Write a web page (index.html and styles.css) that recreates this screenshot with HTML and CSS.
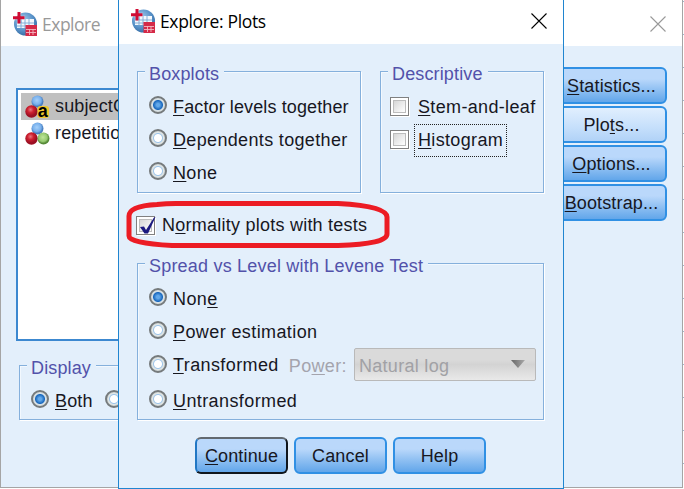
FILE: index.html
```html
<!DOCTYPE html>
<html lang="en">
<head>
<meta charset="utf-8">
<title>Explore: Plots</title>
<link rel="stylesheet" href="styles.css">
</head>
<body>
<svg class="defs" width="0" height="0">
  <defs>
    <radialGradient id="globe" cx="40%" cy="35%" r="65%"><stop offset="0" stop-color="#a6caea"/><stop offset=".65" stop-color="#5a94ca"/><stop offset="1" stop-color="#3a70a8"/></radialGradient>
    <radialGradient id="blueBall" cx="45%" cy="40%"><stop offset="0" stop-color="#a5d0fa"/><stop offset=".7" stop-color="#78b0ec"/><stop offset="1" stop-color="#4a7fc0"/></radialGradient>
    <radialGradient id="redBall" cx="42%" cy="35%"><stop offset="0" stop-color="#e87880"/><stop offset=".5" stop-color="#ce2030"/><stop offset="1" stop-color="#9c1024"/></radialGradient>
    <radialGradient id="greenBall" cx="45%" cy="40%"><stop offset="0" stop-color="#bfe69a"/><stop offset=".7" stop-color="#96ca70"/><stop offset="1" stop-color="#568a38"/></radialGradient>
    <linearGradient id="arrow"><stop offset="0" stop-color="#666"/><stop offset="1" stop-color="#aaa"/></linearGradient>
    <symbol id="app" viewBox="0 0 24 24">
      <circle cx="12.500" cy="12" r="11.500" fill="url(#globe)"/>
      <path d="M9 7h12v9H4v-5h5z" fill="#f3f8fd"/>
      <path d="M4 11h17M4 14h17M8 10v6M12 7v9M16 7v9" stroke="#7aa8d4" stroke-width=".9" fill="none"/>
      <path d="M6 0v12M0 6h12" stroke="#fff" stroke-width="4.4" opacity=".35"/>
      <path d="M6 0v11.500M0 5.800h11.500" stroke="#d00c34" stroke-width="3"/>
      <rect x="12.500" y="13" width="11.500" height="11" fill="#d52a48"/>
      <path d="M13 17.500h10M13 20.500h10M16.500 17v6M20 17v6" stroke="#f3b7c2" stroke-width=".9"/>
    </symbol>
    <symbol id="nominal" viewBox="0 0 25 24">
      <circle cx="12.500" cy="6.500" r="6" fill="url(#blueBall)"/>
      <circle cx="6.500" cy="16.500" r="6.200" fill="url(#redBall)"/>
    </symbol>
  </defs>
</svg>

<main class="desktop">
  <section class="window parent">
    <header class="titlebar">
      <svg class="app-icon"><use href="#app"/></svg>
      <h1>Explore</h1>
      <svg class="close" viewBox="0 0 16 16"><path d="M.5.5l15 15M15.500.5l-15 15"/></svg>
    </header>
    <div class="parent-body">
      <div class="left-col">
        <ul class="variables">
          <li class="selected"><svg viewBox="0 0 25 24"><use href="#nominal"/><rect x="12.500" y="11" width="11.500" height="12" rx="3" fill="#efc62c"/><text x="12.700" y="21.500" class="badge-a">a</text></svg><span>subjectGroup</span></li>
          <li><svg viewBox="0 0 25 24"><use href="#nominal"/><circle cx="18.500" cy="16.500" r="6" fill="url(#greenBall)"/></svg><span>repetitions</span></li>
        </ul>
        <fieldset class="display">
          <legend>Display</legend>
          <div class="display-row">
            <label class="option"><i class="radio on"></i><span><u>B</u>oth</span></label>
            <label class="option"><i class="radio"></i></label>
          </div>
        </fieldset>
      </div>
      <nav class="side">
        <button><span><u>S</u>tatistics...</span></button>
        <button class="pressed"><span>Plo<u>t</u>s...</span></button>
        <button><span><u>O</u>ptions...</span></button>
        <button><span><u>B</u>ootstrap...</span></button>
      </nav>
    </div>
  </section>

  <section class="window dialog">
    <header class="titlebar">
      <svg class="app-icon"><use href="#app"/></svg>
      <h1>Explore: Plots</h1>
      <svg class="close" viewBox="0 0 16 16"><path d="M.5.5l15 15M15.500.5l-15 15"/></svg>
    </header>
    <div class="dialog-body">
      <div class="groups">
        <fieldset>
          <legend>Boxplots</legend>
          <div class="options">
            <label class="option tight"><i class="radio on"></i><span><u>F</u>actor levels together</span></label>
            <label class="option"><i class="radio"></i><span><u>D</u>ependents together</span></label>
            <label class="option"><i class="radio"></i><span><u>N</u>one</span></label>
          </div>
        </fieldset>
        <fieldset>
          <legend>Descriptive</legend>
          <div class="options checks">
            <label class="option"><i class="check"></i><span><u>S</u>tem-and-leaf</span></label>
            <label class="option"><i class="check"></i><span class="focused"><u>H</u>istogram</span></label>
          </div>
        </fieldset>
      </div>
      <label class="option normality"><i class="check"><svg viewBox="0 0 20 20"><path d="M4 11l4-.5 2 3.500L18 1.500l1.500-.5L12 17.500H8.500z" fill="#1c1a80"/></svg></i><span>N<u>o</u>rmality plots with tests</span>
        <svg class="ring" viewBox="0 0 264 50"><path d="M31 4.500Q40 3.500 50 3.500H212Q261 6 261 17V34Q261 44 212 45.500H46Q3 43 3 36V16Q3 6 31 4.500Z"/></svg>
      </label>
      <fieldset class="spread">
        <legend>Spread vs Level with Levene Test</legend>
        <div class="options">
          <label class="option"><i class="radio on"></i><span>Non<u>e</u></span></label>
          <label class="option"><i class="radio"></i><span><u>P</u>ower estimation</span></label>
          <div class="transform">
            <label class="option"><i class="radio"></i><span><u>T</u>ransformed</span></label>
            <span class="power">Po<u>w</u>er:</span>
            <div class="select"><span>Natural log</span><svg viewBox="0 0 14 8"><path d="M0 0h14L7 8z" fill="url(#arrow)"/></svg></div>
          </div>
          <label class="option last"><i class="radio"></i><span><u>U</u>ntransformed</span></label>
        </div>
      </fieldset>
      <footer class="actions">
        <button class="default"><span><u>C</u>ontinue</span></button>
        <button><span>Cancel</span></button>
        <button><span>Help</span></button>
      </footer>
    </div>
  </section>
</main>
</body>
</html>
```
FILE: styles.css
```css
* { box-sizing: border-box; }
body { margin: 0; overflow: hidden; background: #fff; font: 18px/20px "Liberation Sans", Arial, sans-serif; letter-spacing: .14px; color: #17171f; }
.defs { position: absolute; }
.desktop { position: relative; width: 684px; height: 489px; overflow: hidden; background: repeating-linear-gradient(#fff 0 1px, #9fb8d0 1px 2px, #fff 2px 33px); }
.window { position: absolute; background: #e3effb; overflow: hidden; }
.parent { left: 0; top: 0; width: 683px; height: 488px; border: 1px solid #a5a5a5; border-top: 0; }
.dialog { left: 118px; top: 0; width: 446px; height: 489px; border: 1px solid #2085d0; border-top: 0; }

.titlebar { display: flex; align-items: center; background: #fff; font-family: "Open Sans", "Noto Sans", sans-serif; }
.titlebar h1 { flex: 1; margin: 0 0 0 5px; font-size: 17.5px; line-height: 24px; font-weight: 400; letter-spacing: -.35px; color: #000; }
.parent .titlebar { height: 46px; padding: 1px 16px 0 12px; }
.parent .titlebar h1 { color: #999; letter-spacing: -.5px; }
.dialog .titlebar { height: 44px; padding: 0 16px 3px 12px; }
.dialog .titlebar h1 { padding-top: 1px; }
.app-icon { width: 24px; height: 24px; }
.close { width: 16px; height: 16px; fill: none; stroke: #000; stroke-width: 1.1; }
.parent .close { stroke: #999; }

.parent-body { display: flex; justify-content: space-between; padding: 21px 15px 0; }
.left-col { width: 300px; padding-top: 21px; }
.variables { height: 253px; margin: 0; padding: 3px; list-style: none; background: #fff; border: 2px solid #3c88d0; }
.variables li { display: flex; align-items: center; height: 27px; gap: 5px; padding-left: 4px; }
.variables .selected { background: #c0c0c0; }
.variables svg { width: 25px; height: 24px; }
.variables span { padding-bottom: 1px; }
.badge-a { font: bold 18px "Liberation Sans", sans-serif; fill: #000; }

fieldset { min-width: 0; margin: 0; padding: 0; border: 1px solid #85b0dc; box-shadow: 1px 1px 0 #fff, inset 1px 1px 0 #f2f8fe; }
legend { height: 26px; margin-left: 7px; padding: 6px 5px 0 4px; background: #e3effb; color: #5252aa; }
.spread legend { letter-spacing: .2px; }
.display { width: 290px; height: 68px; margin: 11px 0 0 3px; }
.display-row { display: flex; gap: 12px; padding: 5px 0 0 11px; }
.display .option { letter-spacing: .14px; }

.option { display: flex; align-items: center; height: 32px; white-space: nowrap; letter-spacing: .34px; }
.option span { padding-top: 3px; }
.tight { letter-spacing: .12px; }
.options { display: grid; gap: 1px; padding: 5px 0 0 11px; }
.checks { padding-left: 10px; }
u { text-decoration: underline; text-decoration-thickness: 1px; text-underline-offset: 2px; text-decoration-skip-ink: none; }

.radio { width: 18px; height: 18px; flex: none; margin-right: 6px; border: 2px solid #757a7c; border-radius: 50%; background: radial-gradient(circle, #fff 0 3.5px, #9fc5e9 4.5px, #e2e8e8 5.5px, #cbd1d1 7px); }
.radio.on { background: radial-gradient(circle, #63a9ea 0 1.500px, #1867bd 4.5px, #d7e2e8 5.500px, #d5dada 7px); }
.check { width: 19px; height: 19px; flex: none; margin-right: 8px; border: 1px solid #808080; background: linear-gradient(135deg, #cbcbcb, #fbfbfb 75%); box-shadow: 1px 1px 0 #fff, inset 0 0 0 2px #fff, inset 0 0 0 3px #bcbcbc; }
.checks .check { margin-left: -1px; margin-right: 9px; position: relative; top: 1px; }
.focused { position: relative; }
.focused::after { content: ""; position: absolute; left: -4px; top: -3px; width: 91px; height: 31px; border: 1px dotted #222; }

.dialog-body { padding: 14px 0 0 18px; }
.groups { display: grid; grid-template-columns: 224px 164px; gap: 19px; height: 135px; }
.normality { position: relative; height: 20px; margin: 22px 0 15px -1px; letter-spacing: .24px; }
.normality span { padding: 0 0 1px; }
.normality .check { margin-right: 7px; }
.normality .check svg { display: block; width: 20px; height: 20px; margin: -1px; }
.ring { position: absolute; left: -10px; top: -15px; width: 264px; height: 50px; fill: none; stroke: #ec1c24; stroke-width: 5; stroke-linejoin: round; }
.spread { width: 407px; height: 170px; }
.spread .option { letter-spacing: .4px; }
.transform { display: flex; height: 33px; align-items: center; }
.power { margin-left: 10px; padding-top: 4px; color: #a4a4ad; letter-spacing: .35px; }
.select { display: flex; align-items: center; justify-content: space-between; width: 182px; height: 33px; margin-left: 7px; padding: 0 10px 0 4px; border: 1px solid #b9b9b9; border-radius: 2px; background: linear-gradient(#dadada 0 35%, #d3d3d3 50%, #e9e9e9); color: #a1a1a5; position: relative; top: 1px; letter-spacing: .3px; }
.select span { padding-top: 3px; }
.select svg { width: 14px; height: 8px; margin-bottom: 2px; }
.last { margin-top: 2px; }

button { width: 93px; height: 37px; padding: 0; border: 2px solid #3090e4; border-radius: 6px; background: linear-gradient(#bad8fb 0 30%, #93c2f3 60%, #62a6ea); font: inherit; letter-spacing: inherit; color: inherit; }
.actions { display: flex; gap: 6px; margin: 17px 0 0 58px; }
.default { border-color: #626970 #10161d #10161d #2177c4; }
.side { display: grid; gap: 2px; align-content: start; }
.side button { width: 111px; white-space: nowrap; }
.side .pressed { background: linear-gradient(#e1effe, #c5dffb 60%, #b1d2f7); }
```
